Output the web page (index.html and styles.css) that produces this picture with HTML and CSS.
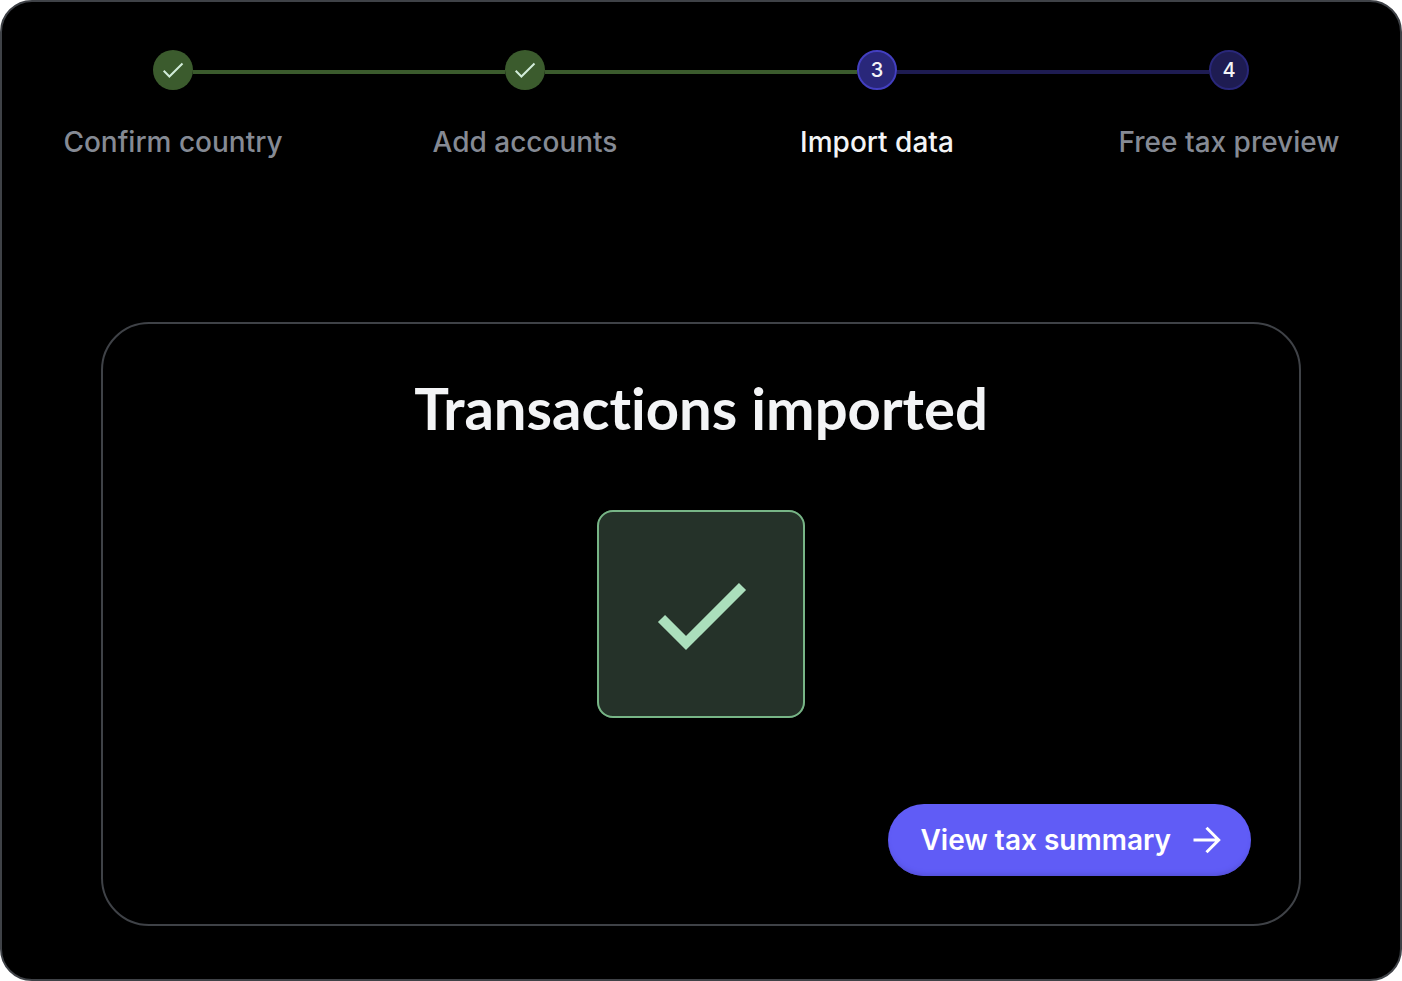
FILE: index.html
```html
<!DOCTYPE html>
<html lang="en">
<head>
  <meta charset="UTF-8">
  <meta name="viewport" content="width=device-width, initial-scale=1.0">
  <title>Import data</title>
  <link rel="stylesheet" href="styles.css">
</head>
<body>
  <main class="app">
    <!-- Progress -->
    <ol class="steps">
      <li class="step done">
        <div class="track">
          <span class="marker">
            <svg viewBox="0 0 40 40" aria-hidden="true"><path d="M10.7 20.8L16.4 26.5L29.5 13.5"/></svg>
          </span>
        </div>
        <span class="label">Confirm country</span>
      </li>
      <li class="step done">
        <div class="track">
          <span class="marker">
            <svg viewBox="0 0 40 40" aria-hidden="true"><path d="M10.7 20.8L16.4 26.5L29.5 13.5"/></svg>
          </span>
        </div>
        <span class="label">Add accounts</span>
      </li>
      <li class="step current" aria-current="step">
        <div class="track"><span class="marker">3</span></div>
        <span class="label">Import data</span>
      </li>
      <li class="step">
        <div class="track"><span class="marker">4</span></div>
        <span class="label">Free tax preview</span>
      </li>
    </ol>

    <!-- Result -->
    <section class="card">
      <h1>Transactions imported</h1>
      <div class="badge">
        <svg viewBox="0 0 208 208" aria-hidden="true"><path d="M64.5 108.5L89 133L145.5 76.5"/></svg>
      </div>
      <button type="button" class="btn">
        View tax summary
        <svg viewBox="0 0 32 32" aria-hidden="true"><path d="M2.5 16H28M15.5 3.8L27.7 16L15.5 28.2"/></svg>
      </button>
    </section>
  </main>
</body>
</html>
```
FILE: styles.css
```css
* { box-sizing: border-box; }
body { margin: 0; background: #fff; font-family: Inter, "Liberation Sans", sans-serif; color: #f3f4f6; }
svg { display: block; fill: none; }

.app { min-height: 100vh; padding: 48px 0 53px; background: #000; border: 2px solid #3f4247; border-radius: 32px; overflow: hidden; }

/* steps */
.steps { display: flex; list-style: none; margin: 0 -5px 164px; padding: 0; }
.step { flex: 1 1 0; text-align: center; }
.track { display: flex; align-items: center; margin-bottom: 36px; }
.track::before, .track::after { content: ""; flex: 1; height: 4px; margin-top: 4px; background: #1e1c52; }
.marker { display: flex; align-items: center; justify-content: center; width: 40px; height: 40px; border: 2px solid #29277a; border-radius: 50%; background: #1e1c52; font-size: 20px; line-height: 24px; font-weight: 500; }
.label { display: block; font-size: 28px; line-height: 32px; font-weight: 500; color: #858a94; }

.done .track::before, .done .track::after, .current .track::before { background: #3b5b2d; }
.done .marker { border: none; background: #3b5b2d; }
.marker svg { width: 40px; height: 40px; stroke: #d1ecd9; stroke-width: 2; }
.current .marker { border-color: #433fc0; background: #29277a; }
.current .label { color: #f3f4f6; }
.step:first-child .track::before, .step:last-child .track::after { background: none; }

/* card */
.card { display: flex; flex-direction: column; align-items: center; margin: 0 99px; padding: 48px; border: 2px solid #3f4247; border-radius: 48px; }
h1 { margin: 0 0 66px; font-family: Lato, "Liberation Sans", sans-serif; font-size: 58px; line-height: 72px; font-weight: 700; font-variant-ligatures: none; }
.badge { width: 208px; height: 208px; margin-bottom: 86px; border-radius: 16px; background: #253229; box-shadow: inset 0 0 0 2px #77b586; }
.badge svg { width: 208px; height: 208px; stroke: #abdfbc; stroke-width: 10; }

.btn { display: flex; align-items: center; gap: 20px; align-self: flex-end; height: 72px; padding: 0 28px 0 32px; border: none; border-radius: 36px; background: #605cf6; box-shadow: inset 0 -4px 4px -2px #5450d8; color: #fff; font: inherit; font-size: 28px; line-height: 32px; font-weight: 600; cursor: pointer; }
.btn:hover { background: #6e6af8; }
.btn svg { width: 32px; height: 32px; stroke: #fff; stroke-width: 3; }
```
